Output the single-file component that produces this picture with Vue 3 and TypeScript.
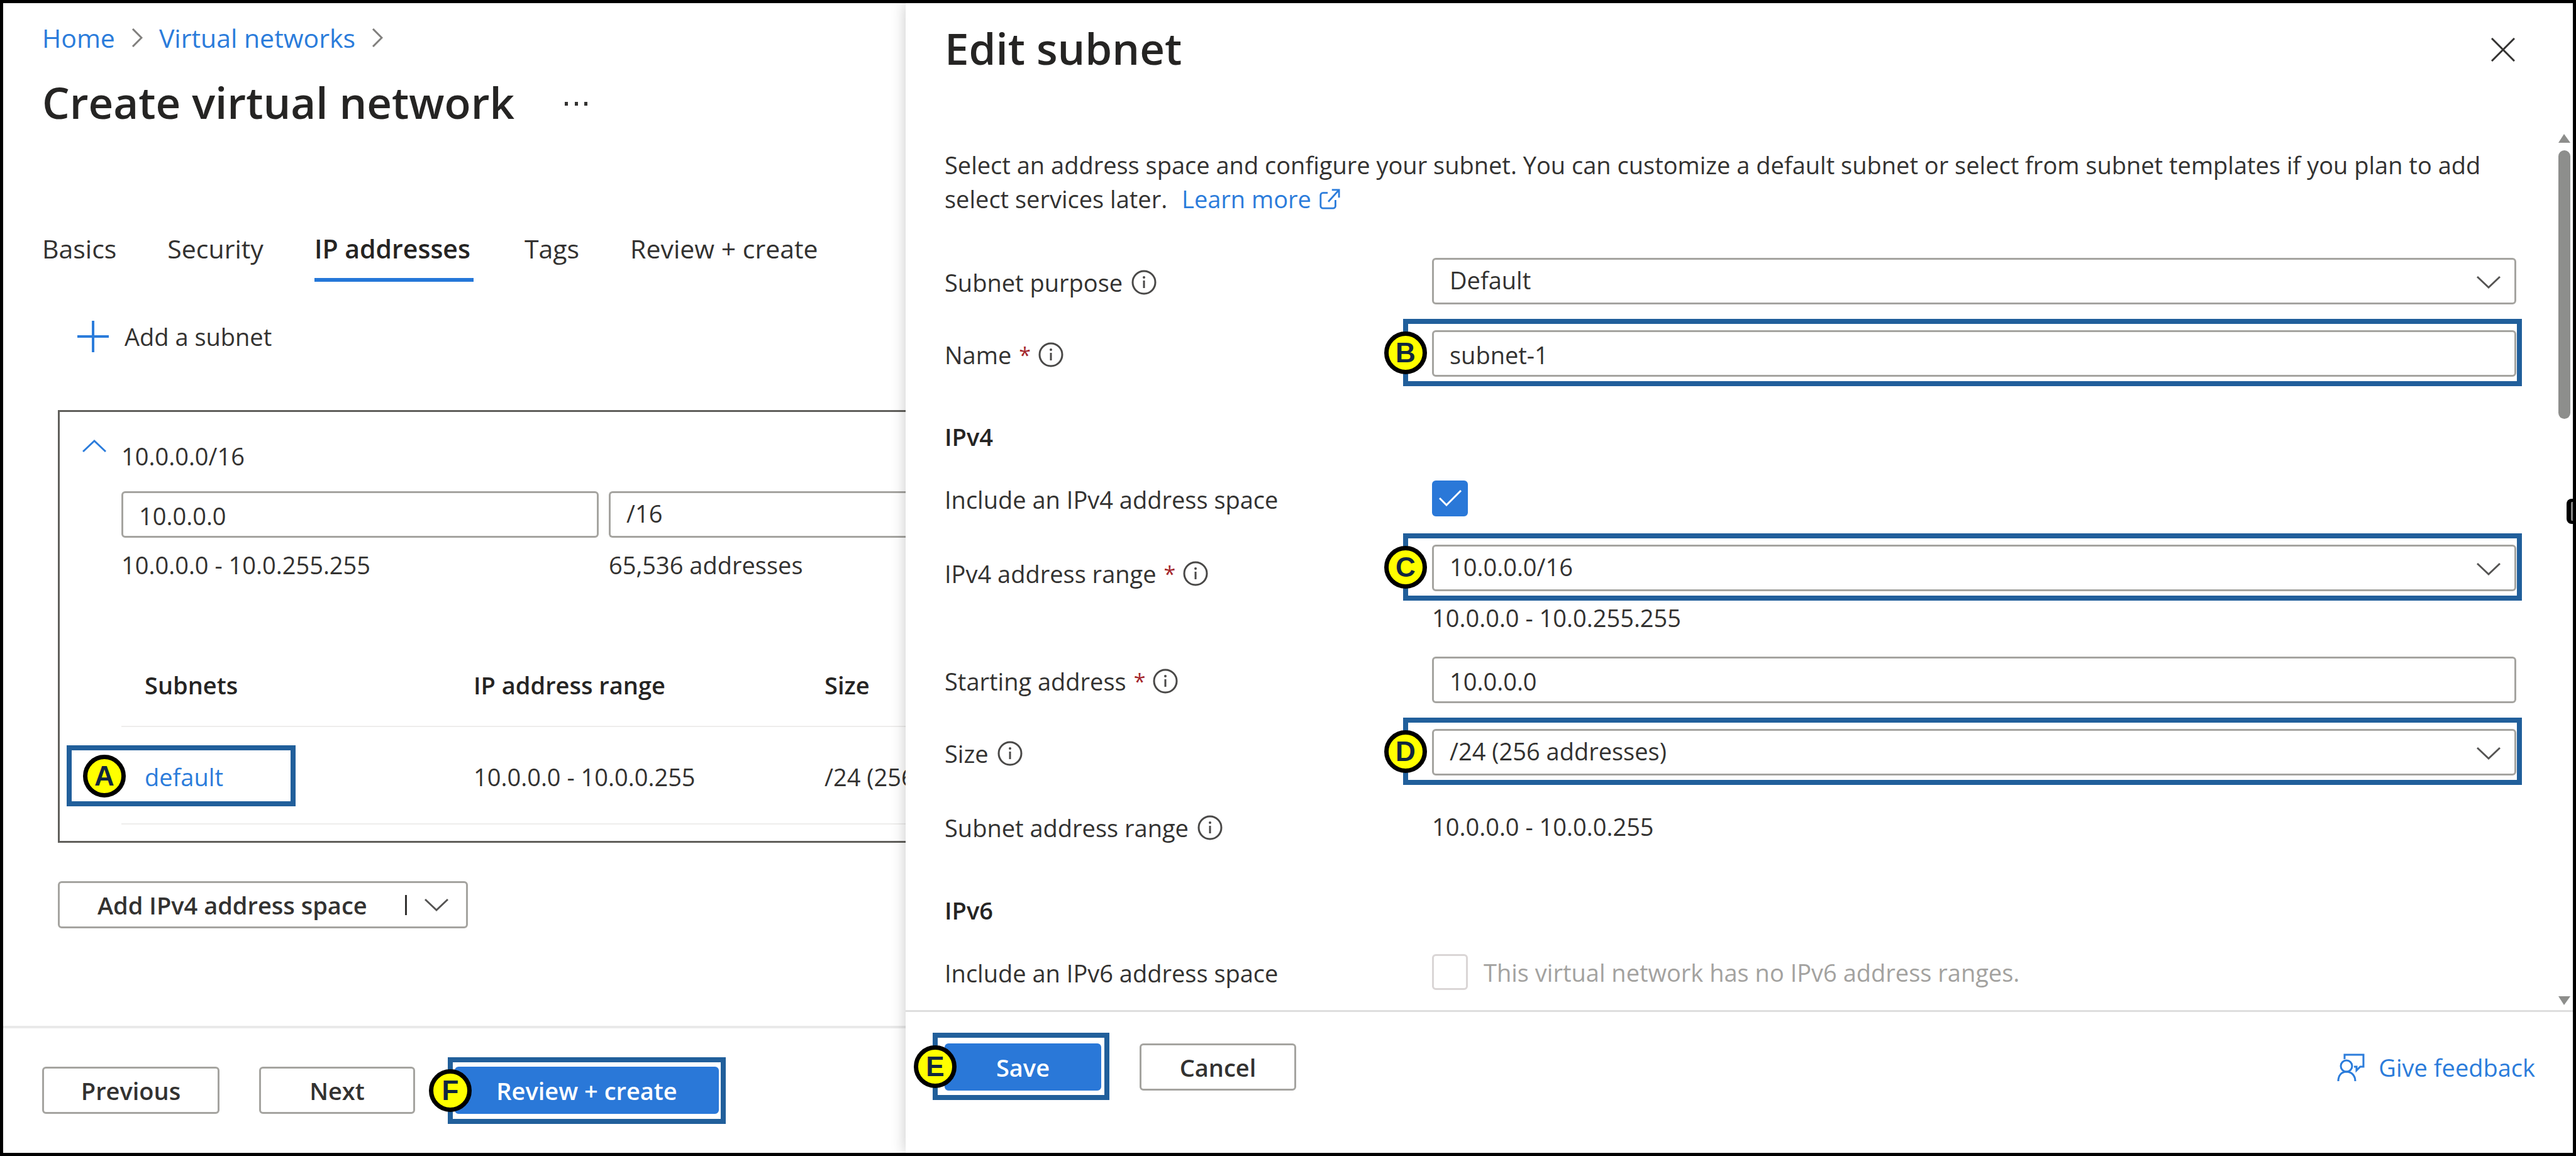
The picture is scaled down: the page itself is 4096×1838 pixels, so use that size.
<script setup lang="ts">
import { ref } from 'vue'

interface Subnet {
  name: string
  range: string
  size: string
}

const tabs: string[] = ['Basics', 'Security', 'IP addresses', 'Tags', 'Review + create']
const activeTab = ref('IP addresses')

const spaceAddress = ref('10.0.0.0')
const spacePrefix = ref('/16')
const subnets: Subnet[] = [
  { name: 'default', range: '10.0.0.0 - 10.0.0.255', size: '/24 (256 addresses)' },
]

const purpose = ref('Default')
const subnetName = ref('subnet-1')
const includeIpv4 = ref(true)
const ipv4Range = ref('10.0.0.0/16')
const startingAddress = ref('10.0.0.0')
const subnetSize = ref('/24 (256 addresses)')
const includeIpv6 = ref(false)
</script>

<template>
  <div class="shell">
    <svg class="sprite" aria-hidden="true">
      <symbol id="info" viewBox="0 0 40 40">
        <circle cx="20" cy="20" r="18" fill="none" stroke="currentColor" stroke-width="3" />
        <path d="M20 17v12" stroke="currentColor" stroke-width="3" />
        <circle cx="20" cy="12" r="2" fill="currentColor" />
      </symbol>
      <symbol id="chevron-right" viewBox="0 0 18 30">
        <path d="M2 1l14 14L2 29" fill="none" stroke="currentColor" stroke-width="3" />
      </symbol>
      <symbol id="chevron-down" viewBox="0 0 38 22">
        <path d="M1 2l18 17L37 2" fill="none" stroke="currentColor" stroke-width="3" />
      </symbol>
    </svg>

    <div class="page">
      <main class="page-body">
        <nav class="crumbs" aria-label="Breadcrumb">
          <a href="#home">Home</a>
          <svg class="crumb-sep"><use href="#chevron-right" /></svg>
          <a href="#networks">Virtual networks</a>
          <svg class="crumb-sep"><use href="#chevron-right" /></svg>
        </nav>

        <div class="title-row">
          <h1>Create virtual network</h1>
          <button class="more" aria-label="More actions">
            <svg viewBox="0 0 36 6"><path d="M0 0h5v6H0zM16 0h5v6h-5zM31 0h5v6h-5z" fill="currentColor" /></svg>
          </button>
        </div>

        <div class="tabs" role="tablist">
          <button
            v-for="tab in tabs"
            :key="tab"
            class="tab"
            :class="{ active: tab === activeTab }"
            role="tab"
            :aria-selected="tab === activeTab"
            @click="activeTab = tab"
          >{{ tab }}</button>
        </div>

        <button class="add-subnet">
          <svg viewBox="0 0 52 52"><path d="M26 1v50M1 26h50" stroke="currentColor" stroke-width="4" /></svg>
          Add a subnet
        </button>

        <section class="space">
          <button class="collapse" aria-label="Collapse address space">
            <svg viewBox="0 0 38 22"><path d="M1 20L19 3l18 17" fill="none" stroke="currentColor" stroke-width="3" /></svg>
          </button>
          <div class="space-body">
            <div class="line">10.0.0.0/16</div>
            <div class="space-inputs">
              <input v-model="spaceAddress" class="control" aria-label="Address space" />
              <select v-model="spacePrefix" class="control open-end" aria-label="Address space size">
                <option>/16</option>
              </select>
            </div>
            <div class="space-inputs space-notes">
              <span class="line">10.0.0.0 - 10.0.255.255</span>
              <span class="line">65,536 addresses</span>
            </div>
            <table class="subnets">
              <thead>
                <tr><th class="col-name">Subnets</th><th class="col-range">IP address range</th><th>Size</th></tr>
              </thead>
              <tbody>
                <tr v-for="s in subnets" :key="s.name">
                  <td>
                    <a href="#default">{{ s.name }}</a>
                    <span class="mark mark-row"><span class="badge">A</span></span>
                  </td>
                  <td>{{ s.range }}</td>
                  <td>{{ s.size }}</td>
                </tr>
              </tbody>
            </table>
          </div>
        </section>

        <button class="btn split">
          Add IPv4 address space
          <span class="split-bar"></span>
          <svg class="chev"><use href="#chevron-down" /></svg>
        </button>
      </main>

      <footer class="page-foot">
        <button class="btn previous">Previous</button>
        <button class="btn next">Next</button>
        <div class="marked">
          <button class="btn primary review">Review + create</button>
          <span class="mark mark-button"><span class="badge edge">F</span></span>
        </div>
      </footer>
    </div>

    <aside class="panel">
      <header class="panel-head">
        <h2>Edit subnet</h2>
        <button class="close" aria-label="Close">
          <svg viewBox="0 0 38 38"><path d="M1 1l36 36M37 1L1 37" stroke="currentColor" stroke-width="3" /></svg>
        </button>
      </header>

      <div class="panel-body">
        <form class="form" @submit.prevent>
          <p class="intro">
            Select an address space and configure your subnet. You can customize a default subnet or select from subnet
            templates if you plan to add select services later.
            <a href="#learn" class="learn">Learn more<svg viewBox="0 0 36 36"><path d="M15 7H7a4 4 0 0 0-4 4v18a4 4 0 0 0 4 4h17a4 4 0 0 0 4-4V19M22 2h12v13M34 2L16 22" fill="none" stroke="currentColor" stroke-width="3" /></svg></a>
          </p>

          <div class="field">
            <label for="purpose">Subnet purpose <svg class="info"><use href="#info" /></svg></label>
            <div class="marked">
              <select id="purpose" v-model="purpose" class="control"><option>Default</option></select>
              <svg class="chev drop"><use href="#chevron-down" /></svg>
            </div>
          </div>

          <div class="field after-field">
            <label for="name">Name <b>*</b> <svg class="info"><use href="#info" /></svg></label>
            <div class="marked">
              <input id="name" v-model="subnetName" class="control" />
              <span class="mark mark-field"><span class="badge edge">B</span></span>
            </div>
          </div>

          <h3 class="first">IPv4</h3>

          <div class="field">
            <label for="ipv4">Include an IPv4 address space</label>
            <div class="tick">
              <input id="ipv4" v-model="includeIpv4" type="checkbox" />
              <svg v-if="includeIpv4" class="tick-mark" viewBox="0 0 36 26"><path d="M1 13l11 11L35 1" fill="none" stroke="#fff" stroke-width="3" /></svg>
            </div>
          </div>

          <div class="field hinted">
            <label for="range">IPv4 address range <b>*</b> <svg class="info"><use href="#info" /></svg></label>
            <div>
              <div class="marked">
                <select id="range" v-model="ipv4Range" class="control"><option>10.0.0.0/16</option></select>
                <svg class="chev drop"><use href="#chevron-down" /></svg>
                <span class="mark mark-field"><span class="badge edge">C</span></span>
              </div>
              <div class="line hint">10.0.0.0 - 10.0.255.255</div>
            </div>
          </div>

          <div class="field after-hint">
            <label for="start">Starting address <b>*</b> <svg class="info"><use href="#info" /></svg></label>
            <input id="start" v-model="startingAddress" class="control" />
          </div>

          <div class="field after-field">
            <label for="size">Size <svg class="info"><use href="#info" /></svg></label>
            <div class="marked">
              <select id="size" v-model="subnetSize" class="control"><option>/24 (256 addresses)</option></select>
              <svg class="chev drop"><use href="#chevron-down" /></svg>
              <span class="mark mark-field"><span class="badge edge">D</span></span>
            </div>
          </div>

          <div class="field static">
            <span class="label">Subnet address range <svg class="info"><use href="#info" /></svg></span>
            <output class="line">10.0.0.0 - 10.0.0.255</output>
          </div>

          <h3 class="second">IPv6</h3>

          <div class="field">
            <label for="ipv6">Include an IPv6 address space</label>
            <div class="tick">
              <input id="ipv6" v-model="includeIpv6" type="checkbox" disabled />
              <span class="muted">This virtual network has no IPv6 address ranges.</span>
            </div>
          </div>
        </form>

        <div class="scrollbar" aria-hidden="true">
          <svg viewBox="0 0 19 14"><path d="M9 0L19 14H0z" fill="currentColor" /></svg>
          <div class="track"><div class="thumb"></div></div>
          <svg viewBox="0 0 19 14"><path d="M9 14L19 0H0z" fill="currentColor" /></svg>
        </div>
      </div>

      <footer class="panel-foot">
        <div class="marked">
          <button class="btn primary action">Save</button>
          <span class="mark mark-save"><span class="badge edge">E</span></span>
        </div>
        <button class="btn action">Cancel</button>
        <a href="#feedback" class="feedback">
          <svg viewBox="0 0 44 44">
            <path d="M12 9V2h30v19h-5l-6 6v-6h-4" fill="none" stroke="currentColor" stroke-width="3" />
            <circle cx="15" cy="20" r="9" fill="none" stroke="currentColor" stroke-width="3" />
            <path d="M2 44c0-9 5-15 13-15s14 6 14 15" fill="none" stroke="currentColor" stroke-width="3" />
          </svg>
          Give feedback
        </a>
      </footer>
      <span class="grip"></span>
    </aside>
  </div>
</template>

<style>
body {
  margin: 0;
  background: #fff;
}
</style>

<style scoped>
.shell,
.shell * {
  box-sizing: border-box;
}
.shell {
  display: grid;
  grid-template-columns: 1435fr 2651fr;
  min-height: 100vh;
  border: 5px solid #000;
  background: #fff;
  color: #333231;
  font: 38px/54px 'Open Sans', 'Noto Sans', sans-serif;
}
.sprite {
  position: absolute;
  width: 0;
  height: 0;
}
svg {
  display: block;
  flex: none;
}
a {
  color: #2b7cdb;
  text-decoration: none;
}
button,
input,
select {
  margin: 0;
  padding: 0;
  border: 0;
  background: none;
  color: inherit;
  font: inherit;
}
h1,
h2,
h3,
p {
  margin: 0;
}
h1,
h2 {
  color: #252423;
  font-size: 69px;
  font-weight: 600;
  line-height: 100px;
  white-space: nowrap;
}
.line {
  display: block;
  white-space: nowrap;
}

/* left page */
.page {
  display: flex;
  flex-direction: column;
  min-width: 0;
  overflow: hidden;
}
.page-body {
  flex: 1;
  padding: 28px 0 0 62px;
}
.crumbs {
  display: flex;
  align-items: center;
  gap: 26px;
  font-size: 41px;
}
.crumb-sep {
  width: 18px;
  height: 30px;
  color: #807f7d;
}
.title-row {
  display: flex;
  align-items: center;
  gap: 80px;
  margin-top: 25px;
}
.more {
  padding-top: 6px;
}
.more svg {
  width: 36px;
  height: 6px;
}
.tabs {
  display: flex;
  gap: 81px;
  margin-top: 156px;
  font-size: 41px;
}
.tab {
  padding-bottom: 20px;
  border-bottom: 6px solid transparent;
  white-space: nowrap;
}
.tab.active {
  padding-right: 5px;
  border-color: #2477d8;
  color: #252423;
  font-weight: 600;
}
.add-subnet {
  display: flex;
  align-items: center;
  gap: 24px;
  margin: 60px 0 0 55px;
}
.add-subnet svg {
  width: 52px;
  height: 52px;
  color: #2b7cdb;
}
.space {
  display: flex;
  margin: 90px 0 0 25px;
  padding: 43px 0 26px 36px;
  border: solid #605f5b;
  border-width: 3px 0 3px 3px;
}
.collapse {
  align-self: flex-start;
  color: #2b7cdb;
}
.collapse svg {
  width: 38px;
  height: 22px;
}
.space-body {
  flex: 1;
  min-width: 0;
  margin-left: 24px;
}
.space-inputs {
  display: grid;
  grid-template-columns: 759px 1fr;
  gap: 16px;
  margin-top: 29px;
}
.space-notes {
  margin-top: 16px;
}
.control {
  display: block;
  width: 100%;
  height: 74px;
  padding: 4px 25px 0;
  border: 3px solid #a5a4a0;
  border-radius: 6px;
  background: #fff;
  appearance: none;
}
select.control {
  padding: 0 25px 4px;
}
.open-end {
  border-right: 0;
  border-radius: 6px 0 0 6px;
}
.subnets {
  width: 100%;
  margin-top: 94px;
  border-collapse: separate;
  border-spacing: 0;
  table-layout: fixed;
}
.subnets th,
.subnets td {
  position: relative;
  padding: 5px 0 0 37px;
  border-bottom: 2px solid #eeedec;
  text-align: left;
  white-space: nowrap;
}
.subnets th {
  height: 137px;
  color: #252423;
  font-weight: 600;
}
.subnets td {
  height: 155px;
}
.col-name {
  width: 523px;
}
.col-range {
  width: 558px;
}
.btn {
  height: 75px;
  border: 3px solid #a5a4a0;
  border-radius: 6px;
  background: #fff;
  font-weight: 600;
  white-space: nowrap;
}
.primary {
  border-color: #2a78d8;
  background: #2a78d8;
  color: #fff;
}
.split {
  display: flex;
  align-items: center;
  width: 652px;
  margin: 61px 0 0 25px;
  padding: 0 28px 0 60px;
}
.split-bar {
  width: 3px;
  height: 32px;
  margin: 0 28px 0 auto;
  background: #333231;
}
.chev {
  width: 38px;
  height: 22px;
  color: #555453;
}
.page-foot {
  display: flex;
  align-items: flex-start;
  gap: 63px;
  padding: 61px 0 62px 62px;
  border-top: 4px solid #e9e9e9;
}
.previous {
  width: 282px;
}
.next {
  width: 248px;
}
.review {
  width: 420px;
}

/* annotation frames and letters */
.marked {
  position: relative;
}
.mark {
  position: absolute;
  border: 8px solid #215f9b;
  pointer-events: none;
}
.mark-row {
  inset: 29px auto auto -87px;
  width: 364px;
  height: 97px;
}
.mark-button {
  inset: -15px -11px -16px -11px;
}
.mark-save {
  inset: -17px -13px -15px -19px;
}
.mark-field {
  inset: -18px -9px -15px -46px;
}
.badge {
  position: absolute;
  top: 50%;
  left: 52px;
  width: 68px;
  height: 68px;
  margin: -34px 0 0 -34px;
  border: 7px solid #000;
  border-radius: 50%;
  background: #ff0;
  color: #10263f;
  font: bold 44px/54px 'Liberation Sans', Arial, sans-serif;
  text-align: center;
}
.badge.edge {
  left: -4px;
}

/* side panel */
.panel {
  position: relative;
  display: flex;
  flex-direction: column;
  min-width: 0;
  background: #fff;
  box-shadow: 0 0 22px rgba(0, 0, 0, 0.22);
  clip-path: inset(0 0 0 -40px);
}
.panel-head {
  display: flex;
  align-items: center;
  justify-content: space-between;
  padding: 21px 92px 0 62px;
}
.close {
  padding-top: 6px;
}
.close svg {
  width: 38px;
  height: 38px;
}
.panel-body {
  display: flex;
  flex: 1;
  justify-content: space-between;
  padding-top: 87px;
}
.form {
  flex: 1;
  min-width: 0;
  padding: 22px 67px 30px 62px;
}
.intro {
  margin-bottom: 67px;
}
.learn {
  margin-left: 13px;
  white-space: nowrap;
}
.learn svg {
  display: inline-block;
  width: 34px;
  height: 34px;
  margin-left: 12px;
  vertical-align: -3px;
}
.field {
  display: grid;
  grid-template-columns: 775fr 1724fr;
  align-items: center;
}
.after-field {
  margin-top: 41px;
}
.after-hint {
  margin-top: 35px;
}
.static {
  margin-top: 52px;
}
label,
.label {
  display: flex;
  align-items: center;
  gap: 14px;
  padding-top: 4px;
  white-space: nowrap;
}
label b {
  margin: 0 -2px;
  color: #a4262c;
  font-size: 34px;
  font-weight: 400;
}
.info {
  width: 40px;
  height: 40px;
  color: #4a4948;
}
.drop {
  position: absolute;
  top: 28px;
  right: 25px;
  pointer-events: none;
}
h3 {
  color: #252423;
  font-size: 38px;
  font-weight: 600;
}
.first {
  margin: 68px 0 42px;
}
.second {
  margin: 77px 0 42px;
}
.tick {
  position: relative;
  display: flex;
  align-items: center;
  gap: 25px;
}
.tick input {
  width: 57px;
  height: 57px;
  border: 3px solid #dad6d6;
  border-radius: 6px;
  background: #fff;
  appearance: none;
}
.tick input:checked {
  border-color: #2a78d8;
  background: #2a78d8;
}
.tick-mark {
  position: absolute;
  left: 11px;
  width: 36px;
  height: 26px;
  pointer-events: none;
}
.muted {
  padding-top: 2px;
  color: #a3a2a0;
  white-space: nowrap;
}
.hinted {
  align-items: start;
  margin-top: 45px;
}
.hinted label {
  line-height: 84px;
}
.hint {
  margin-top: 15px;
}
.scrollbar {
  display: flex;
  flex-direction: column;
  width: 19px;
  margin-right: 4px;
  padding-bottom: 8px;
  color: #8d8e8c;
}
.scrollbar svg {
  width: 19px;
  height: 14px;
}
.track {
  flex: 1;
  padding: 12px 0;
}
.thumb {
  height: 32%;
  border-radius: 10px;
  background: #8d8e8c;
}
.panel-foot {
  display: flex;
  align-items: flex-start;
  gap: 61px;
  padding: 50px 60px 99px 62px;
  border-top: 3px solid #dedede;
}
.action {
  width: 249px;
}
.feedback {
  display: flex;
  align-items: center;
  gap: 22px;
  height: 75px;
  margin-left: auto;
}
.feedback svg {
  width: 44px;
  height: 44px;
}
.grip {
  position: absolute;
  top: 788px;
  right: 0;
  width: 10px;
  height: 40px;
  border: solid #000;
  border-width: 5px 0 5px 7px;
  border-radius: 8px 0 0 8px;
  background: #888;
}
</style>
